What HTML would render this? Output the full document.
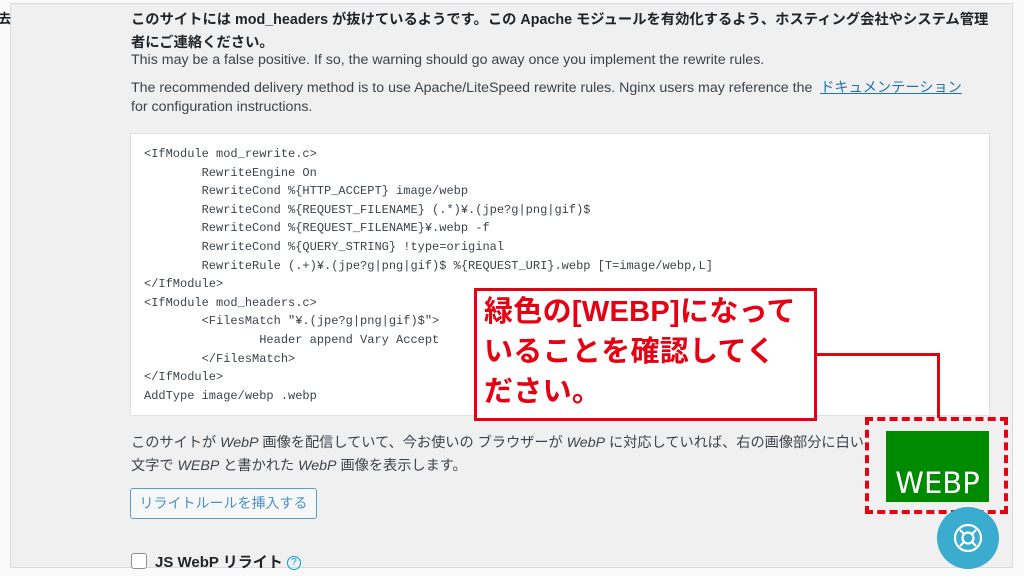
<!DOCTYPE html>
<html><head><meta charset="utf-8"><style>
*{margin:0;padding:0;box-sizing:border-box}
body{width:1024px;height:576px;overflow:hidden;background:#fafafa;font-family:"Liberation Sans","Noto Sans CJK JP",sans-serif;color:#3c434a;position:relative}
.frame{position:absolute;left:10px;top:3px;width:1003px;height:565px;background:#f0f0f1;border:1px solid #dcdcde}
.t{position:absolute;left:131px;font-size:14.2px;white-space:nowrap}
.b{font-weight:bold;color:#1d2327}
.code{position:absolute;left:130px;top:133px;width:860px;height:283px;background:#fff;border:1px solid #e0e0e0;font-family:"Liberation Mono","Noto Sans CJK JP",monospace;font-size:12px;line-height:18.6px;color:#3c434a;padding:11px 0 0 13px;white-space:pre}
a{color:#2271b1;text-decoration:underline}
.btn{position:absolute;left:130px;top:488px;width:187px;height:31px;border:1px solid #5a9bd0;border-radius:3px;background:#f6f7f7;color:#4a90c8;font-size:14px;text-align:center;line-height:29px}
.cb{position:absolute;left:131px;top:553px;width:16px;height:16px;border:1px solid #8c8f94;border-radius:3px;background:#fff}
.callout{position:absolute;left:474px;top:288px;width:343px;height:133px;background:#fff;border:3px solid #e60012;color:#e60012;font-size:29px;font-weight:bold;line-height:40px;padding:1px 0 0 7px;letter-spacing:0.3px}
</style></head><body>
<div class="frame"></div>
<div class="t b" style="left:-2px;top:8px;font-size:13px">去</div>
<div class="t b" style="top:8px;font-size:14.3px">このサイトには mod_headers が抜けているようです。この Apache モジュールを有効化するよう、ホスティング会社やシステム管理</div>
<div class="t b" style="top:31px;font-size:14.3px">者にご連絡ください。</div>
<div class="t" style="top:52px">This may be a false positive. If so, the warning should go away once you implement the rewrite rules.</div>
<div class="t" style="top:77px">The recommended delivery method is to use Apache/LiteSpeed rewrite rules. Nginx users may reference the &nbsp;<a>ドキュメンテーション</a></div>
<div class="t" style="top:99px">for configuration instructions.</div>
<div class="code">&lt;IfModule mod_rewrite.c&gt;
        RewriteEngine On
        RewriteCond %{HTTP_ACCEPT} image/webp
        RewriteCond %{REQUEST_FILENAME} (.*)¥.(jpe?g|png|gif)$
        RewriteCond %{REQUEST_FILENAME}¥.webp -f
        RewriteCond %{QUERY_STRING} !type=original
        RewriteRule (.+)¥.(jpe?g|png|gif)$ %{REQUEST_URI}.webp [T=image/webp,L]
&lt;/IfModule&gt;
&lt;IfModule mod_headers.c&gt;
        &lt;FilesMatch "¥.(jpe?g|png|gif)$"&gt;
                Header append Vary Accept
        &lt;/FilesMatch&gt;
&lt;/IfModule&gt;
AddType image/webp .webp</div>
<div class="t" style="top:432px">このサイトが <i>WebP</i> 画像を配信していて、今お使いの ブラウザーが <i>WebP</i> に対応していれば、右の画像部分に白い</div>
<div class="t" style="top:455px">文字で <i>WEBP</i> と書かれた <i>WebP</i> 画像を表示します。</div>
<div class="btn">リライトルールを挿入する</div>
<div class="cb"></div>
<div class="t b" style="left:155px;top:551px;font-size:15px">JS WebP リライト <span style="color:#00a0d2;font-weight:normal;display:inline-block;width:14px;height:14px;border:1.5px solid #00a0d2;border-radius:50%;text-align:center;line-height:11px;font-size:10px;vertical-align:2px">?</span></div>
<div class="callout">緑色の[WEBP]になって<br>いることを確認してく<br>ださい。</div>
<div style="position:absolute;left:817px;top:353px;width:123px;height:3px;background:#e60012"></div>
<div style="position:absolute;left:937px;top:353px;width:3px;height:65px;background:#e60012"></div>
<div style="position:absolute;left:886px;top:431px;width:103px;height:71px;background:#008a00;color:#fff;font-size:29px;text-align:center;line-height:30px;padding-top:37px;font-family:'DejaVu Sans',sans-serif">WEBP</div>
<div style="position:absolute;left:865px;top:417px;width:143px;height:97px;border:4px dashed #e60012"></div>
<div style="position:absolute;left:937px;top:507px;width:62px;height:62px;border-radius:50%;background:#3aaccd"></div>
<svg style="position:absolute;left:952px;top:522px" width="32" height="32" viewBox="0 0 32 32" fill="none" stroke="#fff" stroke-width="2.2"><circle cx="16" cy="16" r="13"/><circle cx="16" cy="16" r="5.5"/><path d="M12 12L8 8M20 12L24 8M12 20L8 24M20 20L24 24"/></svg>
</body></html>
